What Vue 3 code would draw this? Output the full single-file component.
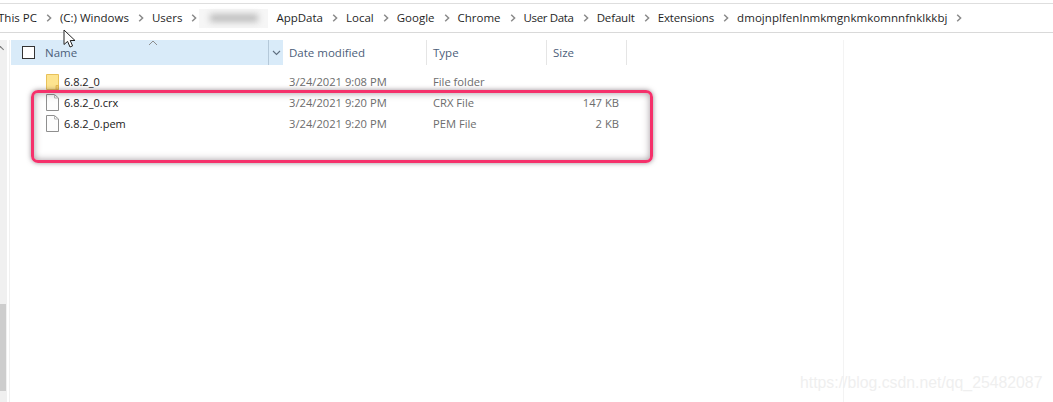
<template>
  <div class="explorer">
    <nav class="crumbs">
      <template v-for="(c, i) in crumbs" :key="i">
        <span v-if="c.blur" class="blurred"><span class="blur-ink"></span></span>
        <span v-else class="crumb" :class="c.cls">{{ c.label }}</span>
        <svg class="chev" width="6" height="8" viewBox="0 0 6 8">
          <path d="M1.2 .8 L4.6 4 L1.2 7.2" fill="none" stroke="#8a8a8a" stroke-width="1.5" />
        </svg>
      </template>
    </nav>

    <div class="body">
      <div class="scroll-track">
        <span class="scroll-up"></span>
        <div class="scroll-thumb"></div>
      </div>

      <main class="pane">
        <div class="cols head">
          <div class="head-name">
            <span class="check"></span>
            <span class="head-label">Name</span>
            <span class="sort-arrow">
              <svg width="10" height="6" viewBox="0 0 10 6"><path d="M1 5 L5 1 L9 5" fill="none" stroke="#8d8d8d" stroke-width="1" /></svg>
            </span>
            <span class="drop">
              <svg width="9" height="6" viewBox="0 0 9 6"><path d="M1 1 L4.5 4.5 L8 1" fill="none" stroke="#5f6f80" stroke-width="1.1" /></svg>
            </span>
          </div>
          <div class="head-cell">Date modified</div>
          <div class="head-cell">Type</div>
          <div class="head-cell">Size</div>
        </div>

        <div class="rows">
          <div v-for="f in files" :key="f.name" class="cols row">
            <div class="name-cell">
              <svg v-if="f.folder" class="ico" width="13" height="16" viewBox="0 0 13 16">
                <path d="M.5 .5 H12.5 V15.5 H.5 Z" fill="#fde48f" stroke="#e8c15a" />
                <path d="M10 15.5 V11.5 H12.5 V15.5 Z" fill="#f4cf6b" stroke="#e0b345" stroke-width=".8" />
              </svg>
              <svg v-else class="ico" width="13" height="17" viewBox="0 0 13 17">
                <path d="M.5 .5 H8.5 L12.5 4 V16.5 H.5 Z" fill="#fdfdfd" stroke="#8f8f8f" />
                <path d="M8.5 .5 V4 H12.5" fill="none" stroke="#b5b5b5" />
              </svg>
              <span class="file-name">{{ f.name }}</span>
            </div>
            <div class="cell">{{ f.date }}</div>
            <div class="cell">{{ f.type }}</div>
            <div class="cell size">{{ f.size }}</div>
          </div>
        </div>
      </main>

      <aside class="side"></aside>
    </div>

    <!-- annotation drawn over the screenshot -->
    <div class="mark"></div>

    <svg class="cursor" width="14" height="20" viewBox="0 0 14 20">
      <path d="M1 1 V15.5 L4.6 12.4 L7 18 L9.6 16.9 L7.2 11.5 H12 Z" fill="#fff" stroke="#222" stroke-width="1" stroke-linejoin="round" />
    </svg>

    <div class="watermark">https://blog.csdn.net/qq_25482087</div>
  </div>
</template>

<script setup>
const crumbs = [
  { label: 'This PC' },
  { label: '(C:) Windows' },
  { label: 'Users' },
  { blur: true },
  { label: 'AppData' },
  { label: 'Local' },
  { label: 'Google' },
  { label: 'Chrome' },
  { label: 'User Data', cls: 'tighter' },
  { label: 'Default', cls: 'tight' },
  { label: 'Extensions', cls: 'tight' },
  { label: 'dmojnplfenlnmkmgnkmkomnnfnklkkbj', cls: 'loose' }
]

const files = [
  { name: '6.8.2_0', date: '3/24/2021 9:08 PM', type: 'File folder', size: '', folder: true },
  { name: '6.8.2_0.crx', date: '3/24/2021 9:20 PM', type: 'CRX File', size: '147 KB' },
  { name: '6.8.2_0.pem', date: '3/24/2021 9:20 PM', type: 'PEM File', size: '2 KB' }
]
</script>

<style>
html, body {
  background: #fff;
  overflow: hidden;
}
</style>

<style scoped>
.explorer {
  position: relative;
  width: 1053px;
  height: 402px;
  overflow: hidden;
  background: #fff;
  font-family: "Open Sans", "Noto Sans", sans-serif;
  font-size: 11.5px;
  color: #1a1a1a;
}

/* Address bar */
.crumbs {
  display: flex;
  align-items: center;
  height: 28px;
  margin-top: 3px;
  margin-left: -2px;
  border-top: 1px solid #dedede;
  border-bottom: 1px solid #d9d9d9;
  box-sizing: content-box;
  white-space: nowrap;
}
.crumb {
  padding-bottom: 2px;
  color: #1f1f1f;
}
.crumb.tighter {
  letter-spacing: -.35px;
}
.crumb.tight {
  letter-spacing: -.15px;
}
.crumb.loose {
  letter-spacing: .05px;
}
.chev {
  flex: none;
  margin: 0 8px 0 9px;
}
.blurred {
  display: flex;
  align-items: center;
  justify-content: center;
  width: 69px;
  height: 19px;
  margin-left: -6px;
  margin-right: 8px;
  background: #f6f6f6;
}
.blurred + .chev {
  display: none;
}
.blur-ink {
  width: 48px;
  height: 8px;
  background: #bdbdbd;
  filter: blur(3px);
}

/* Main area */
.body {
  display: flex;
  height: 362px;
  margin-top: 7px;
}
.scroll-track {
  position: relative;
  flex: none;
  width: 7px;
  background: #f0f0f0;
  border-right: 2px solid #fff;
}
.scroll-up {
  position: absolute;
  top: 7px;
  left: -2px;
  width: 4px;
  height: 4px;
  border-left: 1px solid #777;
  border-top: 1px solid #777;
  transform: rotate(45deg);
}
.scroll-thumb {
  position: absolute;
  top: 264px;
  left: 0;
  width: 6px;
  height: 87px;
  background: #cdcdcd;
}
.pane {
  flex: none;
  width: 832px;
  padding-left: 1px;
  border-left: 1px solid #f0f0f0;
  border-right: 1px solid #f3f3f3;
}
.cols {
  display: grid;
  grid-template-columns: 272px 144px 120px 80px;
}
.head {
  height: 25px;
}
.head-name {
  position: relative;
  display: flex;
  align-items: center;
  background: #d9ebf9;
}
.check {
  width: 11px;
  height: 11px;
  margin-left: 11px;
  background: #fff;
  border: 1px solid #333;
}
.head-label {
  margin-left: 10px;
  color: #4c607a;
}
.sort-arrow {
  position: absolute;
  left: 137px;
  top: 0;
  line-height: 0;
}
.drop {
  position: absolute;
  right: 0;
  top: 0;
  bottom: 0;
  width: 15px;
  display: flex;
  align-items: center;
  justify-content: center;
  border-left: 1px solid #b4c8d9;
  box-sizing: border-box;
}
.head-cell {
  display: flex;
  align-items: center;
  padding-left: 6px;
  color: #4c607a;
  border-right: 1px solid #e5e5e5;
}
.rows {
  padding-top: 6px;
}
.row {
  height: 21px;
  align-items: center;
}
.name-cell {
  display: flex;
  align-items: center;
  padding-left: 35px;
}
.ico {
  flex: none;
}
.file-name {
  margin-left: 5px;
  font-size: 11px;
  color: #1a1a1a;
}
.cell {
  padding-left: 6px;
  font-size: 11.2px;
  color: #6d6d6d;
}
.size {
  padding: 0 8px 0 0;
  text-align: right;
}
.side {
  flex: 1;
}

/* Overlays */
.mark {
  position: absolute;
  left: 31px;
  top: 90px;
  width: 622px;
  height: 73px;
  box-sizing: border-box;
  border: 3px solid #f5316b;
  border-radius: 7px;
  box-shadow: 0 0 5px rgba(70, 50, 60, .55), inset 0 0 7px rgba(70, 50, 60, .5);
}
.cursor {
  position: absolute;
  left: 63px;
  top: 29px;
}
.watermark {
  position: absolute;
  left: 800px;
  top: 374px;
  font-family: "Liberation Sans", Arial, sans-serif;
  font-size: 15.8px;
  color: #efefef;
  white-space: nowrap;
}
</style>
